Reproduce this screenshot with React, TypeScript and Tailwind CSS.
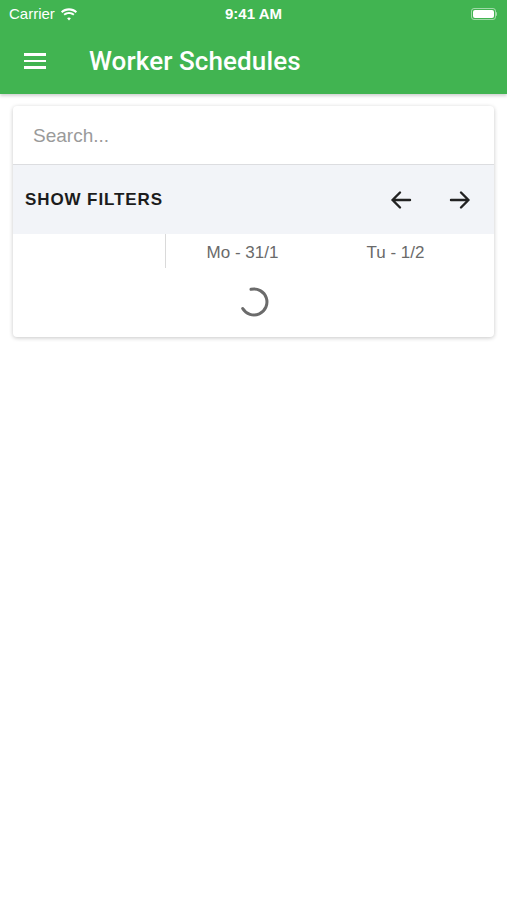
import React from 'react';

function Wifi() {
  return (
    <svg width="18" height="13" viewBox="0 0 17 12" fill="white">
      <path d="M8.5 2.2c2.4 0 4.6.9 6.3 2.4l1.3-1.4C14.1 1.3 11.4.2 8.5.2S2.9 1.3.9 3.2l1.3 1.4C3.9 3.1 6.1 2.2 8.5 2.2z" />
      <path d="M8.5 5.6c1.5 0 2.8.5 3.9 1.4l1.3-1.4C12.3 4.4 10.5 3.7 8.5 3.7S4.7 4.4 3.3 5.6L4.6 7c1.1-.9 2.4-1.4 3.9-1.4z" />
      <path d="M8.5 8.9c.7 0 1.3.2 1.8.6L8.5 11.6 6.7 9.5c.5-.4 1.1-.6 1.8-.6z" />
    </svg>
  );
}

function Battery() {
  return (
    <div className="flex items-center">
      <div className="w-[25px] h-[12px] rounded-[3px] border border-white/50 p-[1px]">
        <div className="w-full h-full rounded-[2px] bg-white" />
      </div>
      <div className="w-[1.5px] h-[4px] bg-white/50 rounded-r-sm" />
    </div>
  );
}

function Spinner() {
  return (
    <svg width="34" height="34" viewBox="0 0 34 34">
      <path
        d="M14 4.3 A13 13 0 1 1 5.7 23.5"
        fill="none"
        stroke="#6b6b6b"
        strokeWidth="3"
        strokeLinecap="round"
      />
    </svg>
  );
}

export default function App() {
  return (
    <div className="w-[507px] h-[900px] bg-white overflow-hidden" style={{ fontFamily: '"Liberation Sans", Arial, sans-serif' }}>
      {/* Header */}
      <div className="bg-[#41b451] shadow-[0_2px_3px_rgba(0,0,0,0.18)] relative z-10">
        <div className="h-[28px] flex items-center justify-between px-[9px] text-white text-[15px]">
          <div className="flex items-center gap-[5px] w-[120px]">
            <span>Carrier</span>
            <Wifi />
          </div>
          <span className="font-semibold">9:41 AM</span>
          <div className="w-[120px] flex justify-end pr-[1px]">
            <Battery />
          </div>
        </div>
        <div className="h-[66px] flex items-center">
          <div className="w-[89px] pl-[24px]">
            <div className="w-[22px] flex flex-col gap-[4px]">
              <div className="h-[2.5px] bg-white" />
              <div className="h-[2.5px] bg-white" />
              <div className="h-[2.5px] bg-white" />
            </div>
          </div>
          <span className="text-white text-[26px] font-medium tracking-[0.1px]" style={{ fontFamily: 'Roboto, "Liberation Sans", sans-serif' }}>
            Worker Schedules
          </span>
        </div>
      </div>

      {/* Card */}
      <div className="pt-[12px] px-[13px]">
        <div className="bg-white rounded-[4px] shadow-[0_1px_4px_rgba(0,0,0,0.22)] overflow-hidden">
          <div className="h-[59px] flex items-center px-[20px] pt-[3px] border-b border-[#dcdde0]">
            <span className="text-[19px] text-[#9a9a9a]">Search...</span>
          </div>
          <div className="h-[69px] bg-[#f2f4f8] flex items-center pl-[12px] pr-[22px]">
            <span className="text-[17px] font-bold tracking-[0.9px] text-[#1c1c1c] flex-1">SHOW FILTERS</span>
            <svg width="24" height="24" viewBox="0 0 24 24" fill="none" stroke="#222" strokeWidth="2.4" strokeLinecap="round" strokeLinejoin="round">
              <path d="M21 12H3.5M11 4.5 3.5 12l7.5 7.5" />
            </svg>
            <div className="w-[35px]" />
            <svg width="24" height="24" viewBox="0 0 24 24" fill="none" stroke="#222" strokeWidth="2.4" strokeLinecap="round" strokeLinejoin="round">
              <path d="M3 12h17.5M13 4.5l7.5 7.5-7.5 7.5" />
            </svg>
          </div>
          <div className="flex h-[34px]">
            <div className="w-[153px] border-r border-[#dadada]" />
            <div className="w-[153px] flex items-center justify-center pt-[3px] text-[17px] text-[#6a6a6a]">Mo - 31/1</div>
            <div className="w-[153px] flex items-center justify-center pt-[3px] text-[17px] text-[#6a6a6a]">Tu - 1/2</div>
          </div>
          <div className="h-[69px] flex items-center justify-center pb-[2px]">
            <Spinner />
          </div>
        </div>
      </div>
    </div>
  );
}
